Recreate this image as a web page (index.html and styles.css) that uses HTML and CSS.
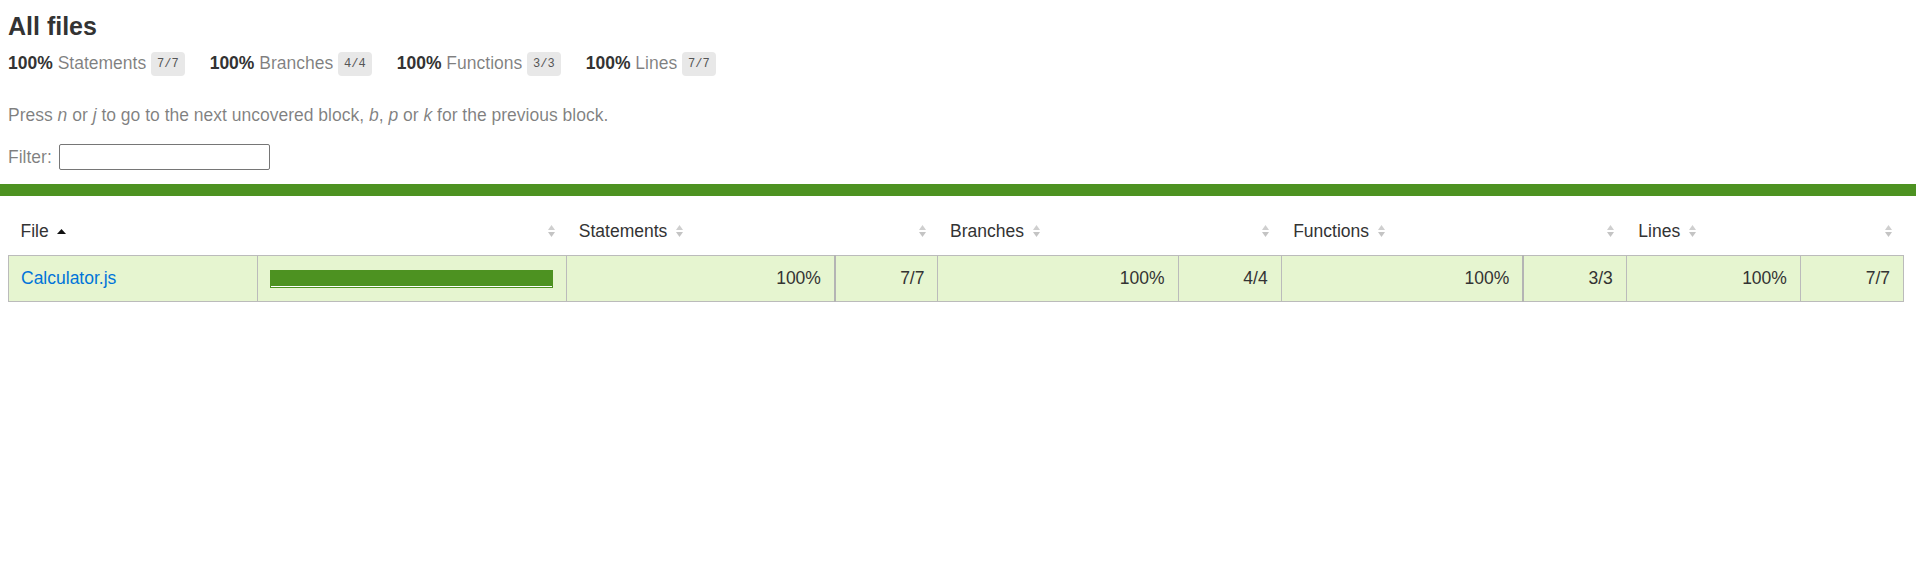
FILE: index.html
```html
<!DOCTYPE html>
<html lang="en">
<head>
<meta charset="utf-8">
<title>Code coverage report for All files</title>
<link rel="stylesheet" href="styles.css">
</head>
<body>
<div class="summary">
  <h1 class="title">All files</h1>
  <div class="stats">
    <div class="stat"><span class="strong">100%</span> <span class="quiet">Statements</span> <span class="fraction">7/7</span></div>
    <div class="stat"><span class="strong">100%</span> <span class="quiet">Branches</span> <span class="fraction">4/4</span></div>
    <div class="stat"><span class="strong">100%</span> <span class="quiet">Functions</span> <span class="fraction">3/3</span></div>
    <div class="stat"><span class="strong">100%</span> <span class="quiet">Lines</span> <span class="fraction">7/7</span></div>
  </div>
  <p class="quiet hint">Press <em>n</em> or <em>j</em> to go to the next uncovered block, <em>b</em>, <em>p</em> or <em>k</em> for the previous block.</p>
  <div class="quiet filter"><span>Filter:</span><input type="search" class="filter-input"></div>
</div>
<div class="status-line"></div>
<div class="table-wrap">
<table class="coverage-summary">
  <colgroup>
    <col class="c-file"><col class="c-pic"><col class="c-pct1"><col class="c-abs"><col class="c-pct2"><col class="c-abs"><col class="c-pct3"><col class="c-abs"><col class="c-pct4"><col class="c-abs">
  </colgroup>
  <thead>
    <tr>
      <th class="file">File<span class="sorter"><svg width="9" height="12" viewBox="0 0 9 12"><polygon points="0,9 4.5,4 9,9" fill="#111"/></svg></span></th>
      <th class="pic"><span class="sorter"><svg width="7" height="12" viewBox="0 0 7 12"><polygon points="0,5 3.5,0 7,5" fill="#cfcfcf"/><polygon points="0,7 3.5,12 7,7" fill="#c4c4c4"/></svg></span></th>
      <th class="pct">Statements<span class="sorter"><svg width="7" height="12" viewBox="0 0 7 12"><polygon points="0,5 3.5,0 7,5" fill="#cfcfcf"/><polygon points="0,7 3.5,12 7,7" fill="#c4c4c4"/></svg></span></th>
      <th class="abs"><span class="sorter"><svg width="7" height="12" viewBox="0 0 7 12"><polygon points="0,5 3.5,0 7,5" fill="#cfcfcf"/><polygon points="0,7 3.5,12 7,7" fill="#c4c4c4"/></svg></span></th>
      <th class="pct">Branches<span class="sorter"><svg width="7" height="12" viewBox="0 0 7 12"><polygon points="0,5 3.5,0 7,5" fill="#cfcfcf"/><polygon points="0,7 3.5,12 7,7" fill="#c4c4c4"/></svg></span></th>
      <th class="abs"><span class="sorter"><svg width="7" height="12" viewBox="0 0 7 12"><polygon points="0,5 3.5,0 7,5" fill="#cfcfcf"/><polygon points="0,7 3.5,12 7,7" fill="#c4c4c4"/></svg></span></th>
      <th class="pct">Functions<span class="sorter"><svg width="7" height="12" viewBox="0 0 7 12"><polygon points="0,5 3.5,0 7,5" fill="#cfcfcf"/><polygon points="0,7 3.5,12 7,7" fill="#c4c4c4"/></svg></span></th>
      <th class="abs"><span class="sorter"><svg width="7" height="12" viewBox="0 0 7 12"><polygon points="0,5 3.5,0 7,5" fill="#cfcfcf"/><polygon points="0,7 3.5,12 7,7" fill="#c4c4c4"/></svg></span></th>
      <th class="pct">Lines<span class="sorter"><svg width="7" height="12" viewBox="0 0 7 12"><polygon points="0,5 3.5,0 7,5" fill="#cfcfcf"/><polygon points="0,7 3.5,12 7,7" fill="#c4c4c4"/></svg></span></th>
      <th class="abs"><span class="sorter"><svg width="7" height="12" viewBox="0 0 7 12"><polygon points="0,5 3.5,0 7,5" fill="#cfcfcf"/><polygon points="0,7 3.5,12 7,7" fill="#c4c4c4"/></svg></span></th>
    </tr>
  </thead>
  <tbody>
    <tr class="high">
      <td class="file"><a href="#">Calculator.js</a></td>
      <td class="pic"><div class="chart"><div class="cover-fill" style="width: 100%"></div></div></td>
      <td class="pct thick">100%</td>
      <td class="abs">7/7</td>
      <td class="pct">100%</td>
      <td class="abs">4/4</td>
      <td class="pct thick">100%</td>
      <td class="abs">3/3</td>
      <td class="pct">100%</td>
      <td class="abs">7/7</td>
    </tr>
  </tbody>
</table>
</div>
</body>
</html>
```

FILE: styles.css
```css
* { box-sizing: border-box; }
html, body { margin: 0; padding: 0; }
body {
  font-family: "Liberation Sans", Arial, sans-serif;
  font-size: 17.5px;
  line-height: 20px;
  color: #333;
  background: #fff;
}
.summary { padding: 12px 12px 0 8px; }
.title { font-size: 25px; line-height: 28px; margin: 0; font-weight: bold; }
.stats { display: flex; gap: 25px; padding: 13px 0 12px; }
.strong { font-weight: bold; }
.quiet { color: rgba(0, 0, 0, 0.5); }
.fraction {
  font-family: "Liberation Mono", monospace;
  font-size: 12px;
  color: #555;
  background: #e8e8e8;
  padding: 5px 6px;
  border-radius: 4px;
  vertical-align: middle;
}
.hint { margin: 19px 0; }
.filter { display: flex; align-items: center; gap: 7px; height: 26px; }
.filter-input {
  width: 211px;
  height: 26px;
  border: 1px solid #767676;
  border-radius: 2px;
  padding: 1px 2px;
  font: inherit;
  background: #fff;
}
.status-line { height: 12px; background: rgb(77, 146, 33); margin-top: 14px; }
.table-wrap { padding: 12px 12px 12px 8px; }
.coverage-summary { border-collapse: collapse; width: 100%; table-layout: fixed; }
.c-file { width: 249px; }
.c-pic { width: 309px; }
.c-pct1 { width: 268px; }
.c-pct2 { width: 240px; }
.c-pct3 { width: 242px; }
.c-pct4 { width: 174px; }
.c-abs { width: 103px; }
.coverage-summary th {
  text-align: left;
  font-weight: normal;
  white-space: nowrap;
  padding: 13px 12px 14px;
  line-height: 20px;
}
.coverage-summary th.pic, .coverage-summary th.abs,
.coverage-summary td.pct, .coverage-summary td.abs { text-align: right; }
.coverage-summary tbody { border: 1px solid #bbb; }
.coverage-summary td {
  padding: 12px 13px 12px 12px;
  line-height: 21px;
  border-right: 1px solid #bbb;
  white-space: nowrap;
}
.coverage-summary td.thick { border-right: 2px solid #b4b4b4; }
.coverage-summary td:last-child { border-right: none; }
.high { background: rgb(230, 245, 208); }
.sorter { display: inline-block; margin-left: 0.5em; height: 12px; line-height: 0; }
.sorter svg { display: block; }
a { color: #0074d9; text-decoration: none; }
.chart { border: 1px solid rgb(77, 146, 33); background: #fff; padding-bottom: 1px; display: flex; }
.cover-fill { height: 15px; background: rgb(77, 146, 33); }
```
